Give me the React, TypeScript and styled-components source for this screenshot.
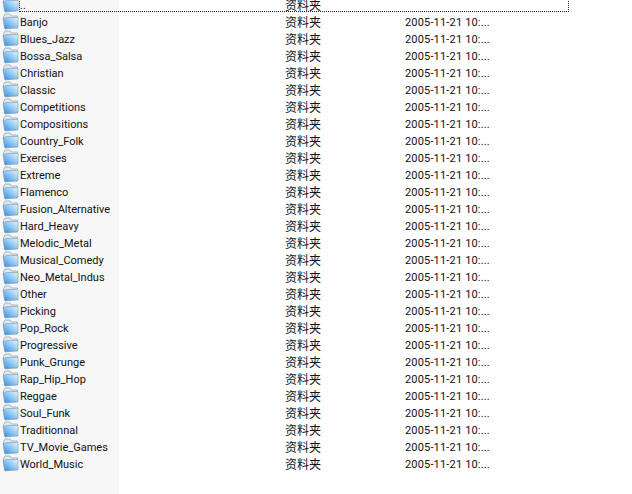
import React from "react";
import styled, { createGlobalStyle } from "styled-components";

const Global = createGlobalStyle`
  html, body { margin: 0; padding: 0; background: #fff; }
  body { width: 632px; height: 494px; overflow: hidden; }
`;

const Page = styled.div`
  width: 632px;
  height: 494px;
  overflow: hidden;
  font-family: Roboto, "Liberation Sans", "Noto Sans CJK SC", sans-serif;
  font-size: 11px;
  color: #111;
  position: relative;
`;

const List = styled.div`
  display: flex;
  flex-direction: column;
  margin-top: -4px;
`;

const Row = styled.div`
  display: grid;
  grid-template-columns: 119px 285px 1fr;
  height: 17px;
  width: 569px;
  box-sizing: border-box;
  line-height: 17px;
  white-space: nowrap;
`;

const NameCell = styled.div`
  display: flex;
  align-items: flex-start;
  background: #f7f7f7;
  padding-left: 2px;
  gap: 1px;
`;

const NameLabel = styled.span`
  padding-top: 1px;
  line-height: 17px;
`;

const TypeCell = styled.div`
  padding-left: 166px;
  font-family: "Noto Sans CJK SC", sans-serif;
  font-size: 12px;
`;

const DateCell = styled.div`
  padding-left: 1px;
  padding-top: 1px;
  letter-spacing: 0.17px;
`;

const Filler = styled.div`
  width: 119px;
  height: 40px;
  background: #f7f7f7;
`;

const Focus = styled.div`
  position: absolute;
  left: 19px;
  top: -1px;
  width: 550px;
  height: 13px;
  box-sizing: border-box;
  border: 1px dotted #222;
`;

const Folder = () => (
  <svg width="17" height="17" viewBox="0 0 17 17" style={{ flex: "none" }}>
    <defs>
      <linearGradient id="fold" x1="0" y1="1" x2="1" y2="0">
        <stop offset="0" stopColor="#2f86da" />
        <stop offset="0.5" stopColor="#8cc4f0" />
        <stop offset="1" stopColor="#e8f4fd" />
      </linearGradient>
    </defs>
    <path d="M1.5 4 L3 1 H8 L9.5 3 H15.5 V15 H2.5 Z" fill="#e4e9ec" stroke="#9aa6ad" strokeWidth="0.8" />
    <path d="M1 5.5 L5 4.5 H16 V14.5 L3 16 Z" fill="url(#fold)" stroke="#6f9cc2" strokeWidth="0.6" />
  </svg>
);

const names = [
  "..", "Banjo", "Blues_Jazz", "Bossa_Salsa", "Christian", "Classic", "Competitions", "Compositions",
  "Country_Folk", "Exercises", "Extreme", "Flamenco", "Fusion_Alternative", "Hard_Heavy", "Melodic_Metal",
  "Musical_Comedy", "Neo_Metal_Indus", "Other", "Picking", "Pop_Rock", "Progressive", "Punk_Grunge",
  "Rap_Hip_Hop", "Reggae", "Soul_Funk", "Traditionnal", "TV_Movie_Games", "World_Music",
];

export default function App() {
  return (
    <Page>
      <Global />
      <List>
        {names.map((n, i) => (
          <Row key={n}>
            <NameCell><Folder /><NameLabel>{n}</NameLabel></NameCell>
            <TypeCell>资料夹</TypeCell>
            <DateCell>{i === 0 ? "" : "2005-11-21 10:..."}</DateCell>
          </Row>
        ))}
        <Filler />
      </List>
      <Focus />
    </Page>
  );
}
